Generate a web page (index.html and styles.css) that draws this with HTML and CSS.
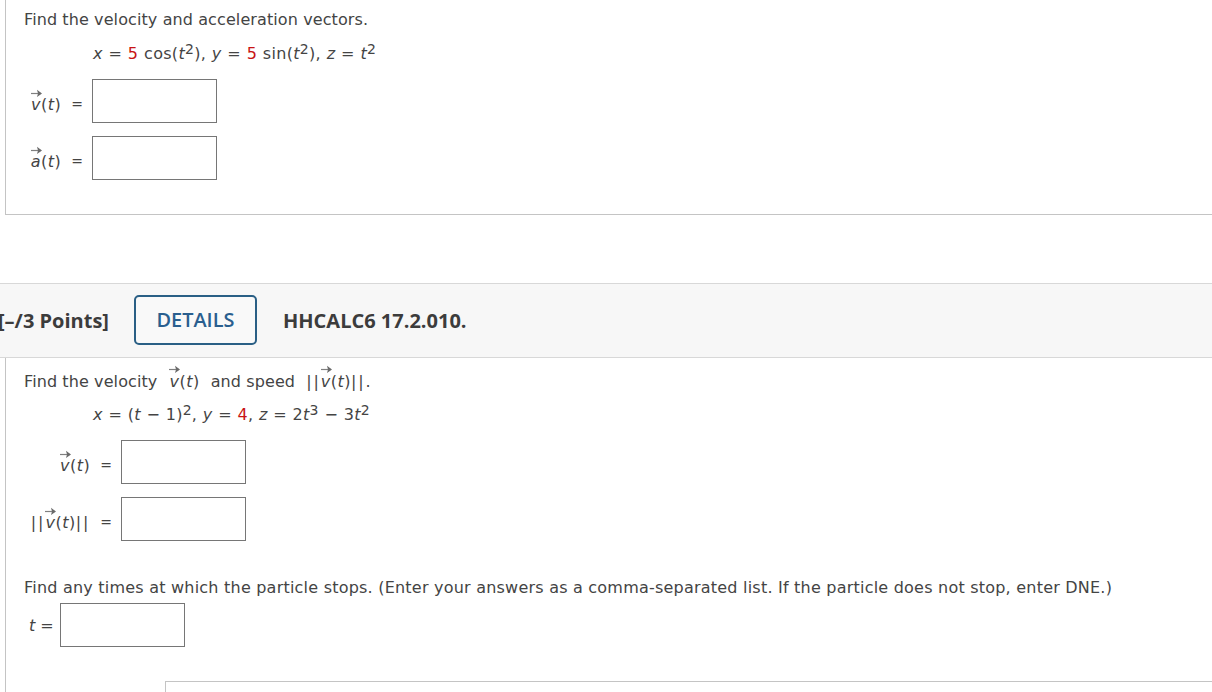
FILE: index.html
```html
<!DOCTYPE html>
<html lang="en">
<head>
  <meta charset="UTF-8">
  <meta name="viewport" content="width=device-width, initial-scale=1.0">
  <title>HHCALC6 17.2.010</title>
  <link rel="stylesheet" href="styles.css">
</head>
<body>

  <!-- Arrow drawn over vector names -->
  <svg class="defs" width="0" height="0">
    <symbol id="arrow" viewBox="0 0 11 8">
      <path d="M0 4.5H10" fill="none" stroke="#808080" stroke-width="1.2"/>
      <path d="M6 0.8L11 4.5L6 8L7 4.5Z" fill="#6a6a6a"/>
    </symbol>
  </svg>

  <!-- Velocity and acceleration -->
  <div class="question first">
    <p class="prompt">Find the velocity and acceleration vectors.</p>
    <p class="equation eq-one"><i>x</i> = <b>5</b> cos(<i>t</i><sup>2</sup>), <i>y</i> = <b>5</b> sin(<i>t</i><sup>2</sup>), <i>z</i> = <i>t</i><sup>2</sup></p>
    <div class="answers">
      <div class="row">
        <label for="v1"><span class="vec"><svg><use href="#arrow"/></svg><i>v</i></span>(<i>t</i>)</label><span class="eq">=</span>
        <input type="text" id="v1">
      </div>
      <div class="row">
        <label for="a1"><span class="vec"><svg><use href="#arrow"/></svg><i>a</i></span>(<i>t</i>)</label><span class="eq">=</span>
        <input type="text" id="a1">
      </div>
    </div>
  </div>

  <!-- Header of the next question -->
  <div class="header">
    <span class="points">[–/3 Points]</span>
    <button class="details">DETAILS</button>
    <span class="name">HHCALC6 17.2.010.</span>
  </div>

  <!-- Velocity and speed -->
  <div class="question second">
    <p class="prompt"><span class="lead">Find the velocity</span><span class="math one"><span class="vec"><svg><use href="#arrow"/></svg><i>v</i></span>(<i>t</i>)</span><span class="mid">and speed</span><span class="math two"><span class="bars">||</span><span class="vec"><svg><use href="#arrow"/></svg><i>v</i></span>(<i>t</i>)<span class="bars">||</span></span>.</p>
    <p class="equation eq-two"><i>x</i> = (<i>t</i> − 1)<sup>2</sup>, <i>y</i> = <b>4</b>, <i>z</i> = 2<i>t</i><sup>3</sup> − 3<i>t</i><sup>2</sup></p>
    <div class="answers wide">
      <div class="row">
        <label for="v2"><span class="vec"><svg><use href="#arrow"/></svg><i>v</i></span>(<i>t</i>)</label><span class="eq">=</span>
        <input type="text" id="v2">
      </div>
      <div class="row">
        <label for="s2"><span class="bars">||</span><span class="vec"><svg><use href="#arrow"/></svg><i>v</i></span>(<i>t</i>)<span class="bars">||</span></label><span class="eq">=</span>
        <input type="text" id="s2">
      </div>
    </div>
    <p class="prompt stops">Find any times at which the particle stops. (Enter your answers as a comma-separated list. If the particle does not stop, enter DNE.)</p>
    <div class="row time">
      <label for="t2"><i>t</i> =</label>
      <input type="text" id="t2">
    </div>
    <div class="help"></div>
  </div>

</body>
</html>
```
FILE: styles.css
```css
* {
  box-sizing: border-box;
}

body {
  margin: 0;
  height: 692px;
  overflow: hidden;
  background: #fff;
  color: #444;
  font-family: Verdana, "DejaVu Sans", sans-serif;
  font-size: 16px;
  white-space: nowrap;
}

.defs {
  display: block;
}

.question {
  margin-left: 5px;
  border-left: 1px solid #c4c4c4;
  padding-left: 18px;
}

.first {
  height: 215px;
  padding-top: 10px;
  border-bottom: 1px solid #c4c4c4;
}

.second {
  height: 334px;
  padding-top: 14px;
}

.prompt,
.equation {
  margin: 0;
  height: 20px;
  line-height: 20px;
  letter-spacing: 0.1px;
}

.equation {
  margin: 14px 0 0 69px;
  letter-spacing: 0.3px;
  word-spacing: 0.3px;
}

.eq-two {
  margin-top: 13px;
  letter-spacing: 0.26px;
}

.equation b {
  color: #c81414;
  font-weight: normal;
}

sup {
  font-size: 14px;
  line-height: 0;
  vertical-align: 5px;
}

.answers {
  display: grid;
  gap: 13px;
  width: 193px;
  margin-top: 15px;
}

.wide {
  width: 222px;
}

.row {
  display: flex;
  align-items: center;
  justify-content: flex-end;
  height: 44px;
}

.row label {
  padding-top: 7px;
  letter-spacing: 0.5px;
}

.eq {
  margin: 6px 9px 0 10px;
  font-size: 14px;
}

input {
  width: 125px;
  height: 44px;
  border: 1px solid #767676;
  background: #fff;
}

.vec {
  position: relative;
}

.vec svg {
  position: absolute;
  left: 0;
  top: -7px;
  width: 11px;
  height: 8px;
}

.row .vec svg {
  top: -6px;
}

.bars {
  letter-spacing: 1.9px;
}

.header {
  display: flex;
  align-items: center;
  height: 75px;
  margin-top: 68px;
  border-top: 1px solid #d8d8d8;
  border-bottom: 1px solid #d8d8d8;
  background: #f7f7f7;
  font-family: "Open Sans", sans-serif;
  font-size: 20px;
  font-weight: bold;
  color: #3c3c3c;
}

.points {
  width: 134px;
  margin-left: -2px;
}

.details {
  width: 123px;
  height: 50px;
  margin: -2px 26px 0 2px;
  border: 2px solid #2a5f85;
  border-radius: 5px;
  background: #f9f9f9;
  color: #2a5f8f;
  font: 600 19.9px "Open Sans", sans-serif;
}

.math {
  letter-spacing: 0.5px;
}

.math.one {
  margin: 0 11px 0 12px;
}

.math.two {
  margin-left: 11px;
}

.mid {
  letter-spacing: 0.1px;
}

.stops {
  margin-top: 37px;
  letter-spacing: 0.218px;
}

.time {
  justify-content: flex-start;
  margin-top: 5px;
  padding-left: 5px;
}

.time label {
  width: 31px;
  padding-top: 0;
  letter-spacing: 0;
}

.help {
  height: 12px;
  margin: 34px 0 0 141px;
  border-top: 1px solid #c4c4c4;
  border-left: 1px solid #c4c4c4;
}
```
